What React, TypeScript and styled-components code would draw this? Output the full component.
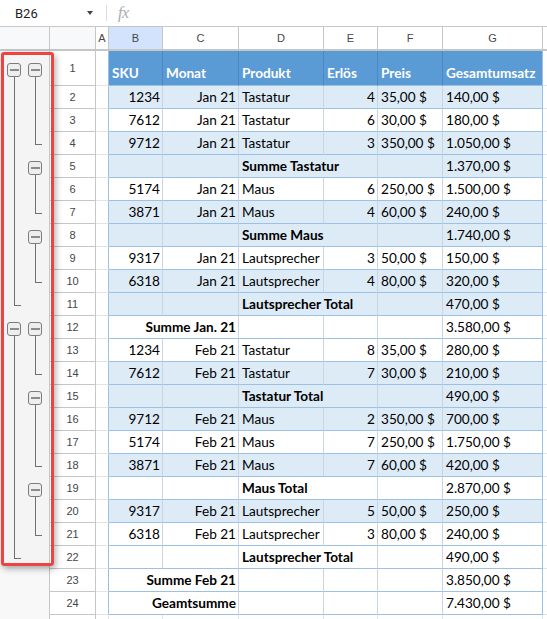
import React from 'react';
import styled, { createGlobalStyle } from 'styled-components';

const GlobalStyle = createGlobalStyle`
  html, body { margin: 0; padding: 0; background: #fff; }
  body { font-family: Lato, "Liberation Sans", sans-serif; overflow: hidden; }
  * { box-sizing: border-box; }
`;

const COLS = '50px 46px 13px 54px 76px 85px 54px 65px 100px 1fr';

type Band = 'head' | 'blue' | 'white' | 'none';
type Kind = 'btn' | 'line' | 'end' | 'none';
type CellDef = { t?: string; r?: boolean; b?: boolean; span?: number };
type RowDef = { n: number; band: Band; cells: CellDef[]; marks: [Kind, Kind] };

const Screen = styled.div`
  position: relative;
  width: 547px;
  height: 619px;
  overflow: hidden;
  background: #fff;
`;

const TopBar = styled.div`
  display: flex;
  align-items: center;
  height: 27px;
  border-bottom: 1px solid #c7c7c7;
`;

const NameBox = styled.div`
  width: 106px;
  display: flex;
  align-items: center;
  justify-content: space-between;
  padding: 0 13px 0 15px;
  font: 13px Roboto, "Liberation Sans", sans-serif;
  color: #1f1f1f;
`;

const Caret = styled.span`
  width: 0;
  height: 0;
  border-left: 3.5px solid transparent;
  border-right: 3.5px solid transparent;
  border-top: 4px solid #444;
`;

const VSep = styled.span`
  width: 1px;
  height: 16px;
  background: #dadce0;
`;

const Fx = styled.span`
  margin-left: 11px;
  font: italic 16px "Liberation Serif", serif;
  color: #a8abaf;
  letter-spacing: -0.5px;
`;

const GridRow = styled.div<{ $h: number }>`
  display: grid;
  grid-template-columns: ${COLS};
  height: ${(p) => p.$h}px;
`;

const Gutter = styled.div<{ $head?: boolean; $out?: boolean }>`
  background: ${(p) => (p.$head ? '#f8f9fa' : p.$out ? '#f8f8f8' : '#f4f4f4')};
  border-right: 1px solid #c4c7c5;
  border-bottom: ${(p) => (p.$head ? '2px solid #c4c7c5' : 'none')};
  svg { display: block; }
`;

const Corner = styled.div`
  background: #f8f9fa;
  border-right: 1px solid #c4c7c5;
  border-bottom: 2px solid #c4c7c5;
`;

const ColHead = styled.div<{ $active?: boolean }>`
  display: flex;
  align-items: center;
  justify-content: center;
  background: ${(p) => (p.$active ? '#d3e3fd' : '#fff')};
  border-right: 1px solid #c4c7c5;
  border-bottom: 2px solid #c4c7c5;
  font: 11px "Liberation Sans", Arial, sans-serif;
  color: #444746;
`;

const RowNum = styled.div`
  display: flex;
  align-items: center;
  justify-content: center;
  background: #fff;
  border-right: 1px solid #c4c7c5;
  border-bottom: 1px solid #c4c7c5;
  font: 11px "Liberation Sans", Arial, sans-serif;
  color: #444746;
`;

const ACell = styled.div<{ $table: boolean }>`
  background: #fff;
  border-right: 1px solid ${(p) => (p.$table ? '#9bc2e6' : '#e2e3e3')};
  border-bottom: 1px solid #e2e3e3;
`;

const bandBg: Record<Band, string> = {
  head: '#5b9bd5',
  blue: '#ddebf7',
  white: '#ffffff',
  none: '#ffffff',
};

const Cell = styled.div<{ $band: Band; $r?: boolean; $b?: boolean; $span: number; $last?: boolean }>`
  grid-column: span ${(p) => p.$span};
  display: flex;
  align-items: ${(p) => (p.$band === 'head' ? 'flex-end' : 'center')};
  justify-content: ${(p) => (p.$r ? 'flex-end' : 'flex-start')};
  padding: ${(p) => (p.$band === 'head' ? '0 2px 4px 3px' : '0 2px 0 3px')};
  background: ${(p) => bandBg[p.$band]};
  color: ${(p) => (p.$band === 'head' ? '#fff' : '#000')};
  font-size: 13.6px;
  font-weight: ${(p) => (p.$b || p.$band === 'head' ? 700 : 400)};
  white-space: nowrap;
  border-bottom: 1px solid ${(p) => (p.$band === 'none' ? '#e2e3e3' : '#9bc2e6')};
  border-right: 1px solid
    ${(p) =>
      p.$band === 'none'
        ? '#e2e3e3'
        : p.$last
        ? '#9bc2e6'
        : p.$band === 'head'
        ? '#4d88c2'
        : '#c9d5e3'};
`;

const HCell = styled.div<{ $head?: boolean }>`
  background: #fff;
  border-bottom: ${(p) => (p.$head ? '2px solid #c4c7c5' : '1px solid #e2e3e3')};
`;

const Highlight = styled.div`
  position: absolute;
  left: 1px;
  top: 52px;
  width: 53px;
  height: 514px;
  border: 3px solid #ef4242;
  border-radius: 3px;
  box-shadow: 2px 3px 6px rgba(0, 0, 0, 0.3);
  pointer-events: none;
`;

const LINE = '#707070';

function Mark({ kind, x, h }: { kind: Kind; x: number; h: number }) {
  const lx = x + 0.5;
  const cy = Math.round(h / 2);
  if (kind === 'btn') {
    const top = cy - 6;
    return (
      <g>
        <line x1={lx} y1={top + 14} x2={lx} y2={h} stroke={LINE} strokeWidth={1} />
        <rect x={x - 6.5} y={top + 0.5} width={13} height={13} rx={2.5} fill="#eeeeee" stroke="#7d7d7d" strokeWidth={1} />
        <line x1={x - 4} y1={top + 7} x2={x + 5} y2={top + 7} stroke="#4a4a4a" strokeWidth={1.2} />
      </g>
    );
  }
  if (kind === 'line') {
    return <line x1={lx} y1={0} x2={lx} y2={h} stroke={LINE} strokeWidth={1} />;
  }
  if (kind === 'end') {
    return (
      <g>
        <line x1={lx} y1={0} x2={lx} y2={cy + 1} stroke={LINE} strokeWidth={1} />
        <line x1={x} y1={cy + 0.5} x2={x + 7} y2={cy + 0.5} stroke={LINE} strokeWidth={1} />
      </g>
    );
  }
  return null;
}

const item = (sku: string, mon: string, prod: string, qty: string, price: string, total: string): CellDef[] => [
  { t: sku, r: true },
  { t: mon, r: true },
  { t: prod },
  { t: qty, r: true },
  { t: price },
  { t: total },
];

const sub = (label: string, total: string): CellDef[] => [{}, {}, { t: label, b: true, span: 2 }, {}, { t: total }];

const grand = (label: string, total: string): CellDef[] => [{ t: label, b: true, r: true, span: 2 }, {}, {}, {}, { t: total }];

const rows: RowDef[] = [
  {
    n: 1,
    band: 'head',
    cells: [{ t: 'SKU' }, { t: 'Monat' }, { t: 'Produkt' }, { t: 'Erlös' }, { t: 'Preis' }, { t: 'Gesamtumsatz' }],
    marks: ['btn', 'btn'],
  },
  { n: 2, band: 'blue', cells: item('1234', 'Jan 21', 'Tastatur', '4', '35,00 $', '140,00 $'), marks: ['line', 'line'] },
  { n: 3, band: 'white', cells: item('7612', 'Jan 21', 'Tastatur', '6', '30,00 $', '180,00 $'), marks: ['line', 'line'] },
  { n: 4, band: 'blue', cells: item('9712', 'Jan 21', 'Tastatur', '3', '350,00 $', '1.050,00 $'), marks: ['line', 'end'] },
  { n: 5, band: 'blue', cells: sub('Summe Tastatur', '1.370,00 $'), marks: ['line', 'btn'] },
  { n: 6, band: 'white', cells: item('5174', 'Jan 21', 'Maus', '6', '250,00 $', '1.500,00 $'), marks: ['line', 'line'] },
  { n: 7, band: 'blue', cells: item('3871', 'Jan 21', 'Maus', '4', '60,00 $', '240,00 $'), marks: ['line', 'end'] },
  { n: 8, band: 'blue', cells: sub('Summe Maus', '1.740,00 $'), marks: ['line', 'btn'] },
  { n: 9, band: 'white', cells: item('9317', 'Jan 21', 'Lautsprecher', '3', '50,00 $', '150,00 $'), marks: ['line', 'line'] },
  { n: 10, band: 'blue', cells: item('6318', 'Jan 21', 'Lautsprecher', '4', '80,00 $', '320,00 $'), marks: ['line', 'end'] },
  { n: 11, band: 'blue', cells: sub('Lautsprecher Total', '470,00 $'), marks: ['end', 'none'] },
  { n: 12, band: 'white', cells: grand('Summe Jan. 21', '3.580,00 $'), marks: ['btn', 'btn'] },
  { n: 13, band: 'white', cells: item('1234', 'Feb 21', 'Tastatur', '8', '35,00 $', '280,00 $'), marks: ['line', 'line'] },
  { n: 14, band: 'blue', cells: item('7612', 'Feb 21', 'Tastatur', '7', '30,00 $', '210,00 $'), marks: ['line', 'end'] },
  { n: 15, band: 'blue', cells: sub('Tastatur Total', '490,00 $'), marks: ['line', 'btn'] },
  { n: 16, band: 'blue', cells: item('9712', 'Feb 21', 'Maus', '2', '350,00 $', '700,00 $'), marks: ['line', 'line'] },
  { n: 17, band: 'white', cells: item('5174', 'Feb 21', 'Maus', '7', '250,00 $', '1.750,00 $'), marks: ['line', 'line'] },
  { n: 18, band: 'blue', cells: item('3871', 'Feb 21', 'Maus', '7', '60,00 $', '420,00 $'), marks: ['line', 'end'] },
  { n: 19, band: 'white', cells: sub('Maus Total', '2.870,00 $'), marks: ['line', 'btn'] },
  { n: 20, band: 'blue', cells: item('9317', 'Feb 21', 'Lautsprecher', '5', '50,00 $', '250,00 $'), marks: ['line', 'line'] },
  { n: 21, band: 'white', cells: item('6318', 'Feb 21', 'Lautsprecher', '3', '80,00 $', '240,00 $'), marks: ['line', 'end'] },
  { n: 22, band: 'white', cells: sub('Lautsprecher Total', '490,00 $'), marks: ['end', 'none'] },
  { n: 23, band: 'white', cells: grand('Summe Feb 21', '3.850,00 $'), marks: ['none', 'none'] },
  { n: 24, band: 'white', cells: grand('Geamtsumme', '7.430,00 $'), marks: ['none', 'none'] },
  { n: 25, band: 'none', cells: [{}, {}, {}, {}, {}, {}], marks: ['none', 'none'] },
];

function SheetRow({ row }: { row: RowDef }) {
  const h = row.n === 1 ? 35 : 23;
  let col = 0;
  return (
    <GridRow $h={h}>
      <Gutter $out={row.n > 22}>
        <svg width={49} height={h}>
          <Mark kind={row.marks[0]} x={14} h={h} />
          <Mark kind={row.marks[1]} x={35} h={h} />
        </svg>
      </Gutter>
      <RowNum>{row.band === 'none' ? null : row.n}</RowNum>
      <ACell $table={row.band !== 'none'} />
      {row.cells.map((c, i) => {
        const span = c.span ?? 1;
        col += span;
        return (
          <Cell key={i} $band={row.band} $r={c.r} $b={c.b} $span={span} $last={col === 6}>
            {c.t}
          </Cell>
        );
      })}
      <HCell />
    </GridRow>
  );
}

export default function App() {
  return (
    <>
      <GlobalStyle />
      <Screen>
        <TopBar>
          <NameBox>
            <span>B26</span>
            <Caret />
          </NameBox>
          <VSep />
          <Fx>fx</Fx>
        </TopBar>
        <GridRow $h={24}>
          <Gutter $head />
          <Corner />
          <ColHead>A</ColHead>
          <ColHead $active>B</ColHead>
          <ColHead>C</ColHead>
          <ColHead>D</ColHead>
          <ColHead>E</ColHead>
          <ColHead>F</ColHead>
          <ColHead>G</ColHead>
          <HCell $head />
        </GridRow>
        {rows.map((r) => (
          <SheetRow key={r.n} row={r} />
        ))}
        <Highlight />
      </Screen>
    </>
  );
}
